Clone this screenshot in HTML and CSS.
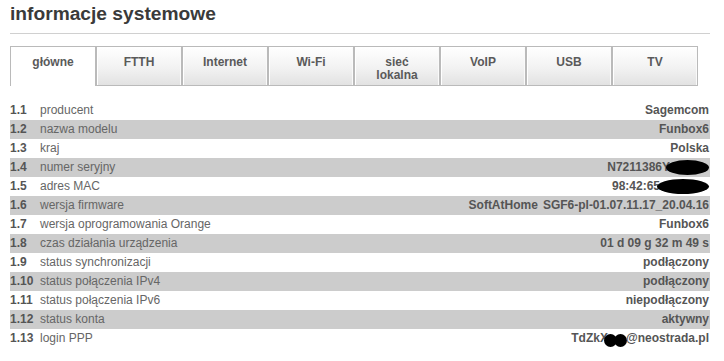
FILE: index.html
```html
<!DOCTYPE html>
<html lang="pl">
<head>
    <meta charset="UTF-8">
    <title>informacje systemowe</title>
    <link rel="stylesheet" href="styles.css">
</head>
<body>
    <div class="page">
        <h2 class="title">informacje systemowe</h2>

        <div class="tabs">
            <div class="tab active">główne</div>
            <div class="tab">FTTH</div>
            <div class="tab">Internet</div>
            <div class="tab">Wi-Fi</div>
            <div class="tab">sieć<br>lokalna</div>
            <div class="tab">VoIP</div>
            <div class="tab">USB</div>
            <div class="tab">TV</div>
        </div>

        <div class="info-table">
            <div class="row"><span class="num">1.1</span><span class="label">producent</span><span class="value">Sagemcom</span></div>
            <div class="row"><span class="num">1.2</span><span class="label">nazwa modelu</span><span class="value">Funbox6</span></div>
            <div class="row"><span class="num">1.3</span><span class="label">kraj</span><span class="value">Polska</span></div>
            <div class="row"><span class="num">1.4</span><span class="label">numer seryjny</span><span class="value">N7211386Y<span class="blob serial"></span></span></div>
            <div class="row"><span class="num">1.5</span><span class="label">adres MAC</span><span class="value">98:42:65<span class="blob mac"></span></span></div>
            <div class="row"><span class="num">1.6</span><span class="label">wersja firmware</span><span class="value"><span class="vendor">SoftAtHome</span>SGF6-pl-01.07.11.17_20.04.16</span></div>
            <div class="row"><span class="num">1.7</span><span class="label">wersja oprogramowania Orange</span><span class="value">Funbox6</span></div>
            <div class="row"><span class="num">1.8</span><span class="label">czas działania urządzenia</span><span class="value">01 d 09 g 32 m 49 s</span></div>
            <div class="row"><span class="num">1.9</span><span class="label">status synchronizacji</span><span class="value">podłączony</span></div>
            <div class="row"><span class="num">1.10</span><span class="label">status połączenia IPv4</span><span class="value">podłączony</span></div>
            <div class="row"><span class="num">1.11</span><span class="label">status połączenia IPv6</span><span class="value">niepodłączony</span></div>
            <div class="row"><span class="num">1.12</span><span class="label">status konta</span><span class="value">aktywny</span></div>
            <div class="row"><span class="num">1.13</span><span class="label">login PPP</span><span class="value">TdZkX<span class="dot"></span><span class="dot"></span>@neostrada.pl</span></div>
        </div>
    </div>
</body>
</html>
```

FILE: styles.css
```css
/* General styling */
body {
    margin: 0;
    background: #fff;
    font-family: "Liberation Sans", Arial, sans-serif;
    color: #555;
}

.page {
    width: 700px;
    padding: 0 14px 0 10px;
}

.title {
    margin: 0 0 12px;
    padding: 2px 0 7px;
    font-size: 19.2px;
    line-height: 24px;
    font-weight: bold;
    color: #3a3a3a;
    border-bottom: 1px solid #d0d0d0;
}

/* Tabs */
.tabs {
    display: flex;
}

.tab {
    box-sizing: border-box;
    width: 86px;
    height: 40px;
    padding-top: 9px;
    text-align: center;
    font-size: 12px;
    line-height: 13px;
    font-weight: bold;
    color: #5a5a5a;
    border: 1px solid #bababa;
    box-shadow: inset 1px 1px 0 #fff, inset -1px 0 0 #fafafa;
    background: linear-gradient(#ffffff, #f2f2f2 55%, #e2e2e2);
}

.tab.active {
    background: #fff;
    border-bottom: none;
    box-shadow: none;
}

/* Info table */
.info-table {
    margin-top: 15px;
}

.row {
    display: flex;
    height: 19px;
    line-height: 19px;
    font-size: 12px;
}

.row:nth-child(even) {
    background: #cccccc;
}

.num {
    width: 30px;
    font-weight: bold;
    color: #555;
}

.label {
    flex: 1;
    color: #666;
}

.value {
    padding-right: 1px;
    font-weight: bold;
    color: #555;
    white-space: nowrap;
}

.vendor {
    margin-right: 5px;
}

/* redacted parts */
.blob {
    display: inline-block;
    vertical-align: top;
    margin-top: 2px;
    height: 15px;
    background: #000;
    border-radius: 50%;
}

.blob.serial {
    width: 43px;
    margin-left: -4px;
}

.blob.mac {
    width: 52px;
    margin-left: -3px;
}

.dot {
    display: inline-block;
    vertical-align: top;
    margin-top: 5px;
    width: 13px;
    height: 13px;
    background: #000;
    border-radius: 50%;
    margin-left: -4px;
}

.dot + .dot {
    margin-left: -3px;
    margin-right: -1px;
}
```
